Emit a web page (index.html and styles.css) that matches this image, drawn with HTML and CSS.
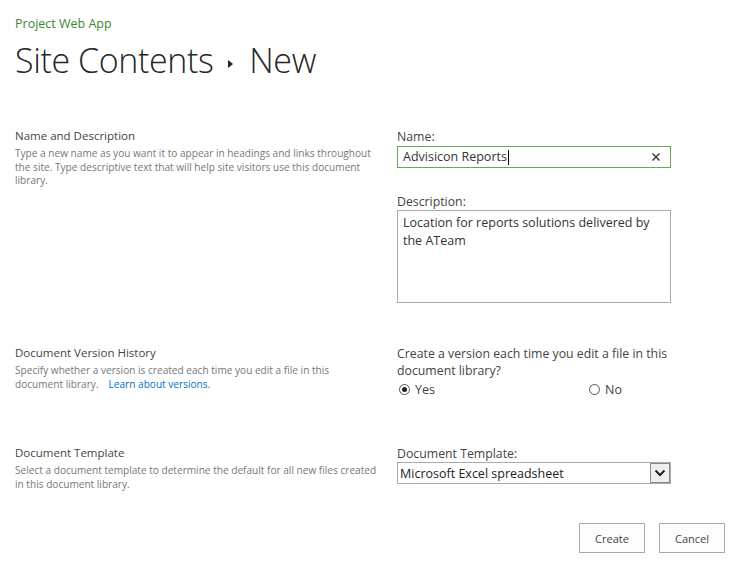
FILE: index.html
```html
<!DOCTYPE html>
<html>
<head>
<meta charset="utf-8">
<link rel="stylesheet" href="styles.css">
</head>
<body>
<div class="page">
  <div class="suite">Project Web App</div>
  <h1 class="title">Site Contents <span class="crumb-arrow"></span> New</h1>

  <div class="form">
    <div class="row row-name">
      <div class="info">
        <div class="info-title">Name and Description</div>
        <div class="info-desc">Type a new name as you want it to appear in headings and links throughout the site. Type descriptive text that will help site visitors use this document library.</div>
      </div>
      <div class="field">
        <div class="label">Name:</div>
        <div class="textbox focused">
          <span class="value">Advisicon Reports</span><span class="caret"></span>
          <svg class="clear" width="10" height="10" viewBox="0 0 10 10"><path d="M1.5 1.5 L8.5 8.5 M8.5 1.5 L1.5 8.5" stroke="#444" stroke-width="1.6"/></svg>
        </div>
        <div class="label label-desc">Description:</div>
        <div class="textarea">Location for reports solutions delivered by the ATeam</div>
      </div>
    </div>

    <div class="row row-version">
      <div class="info">
        <div class="info-title">Document Version History</div>
        <div class="info-desc narrow">Specify whether a version is created each time you edit a file in this document library.<a class="link" href="#">Learn about versions.</a></div>
      </div>
      <div class="field">
        <div class="label question">Create a version each time you edit a file in this document library?</div>
        <div class="radios">
          <label class="radio"><span class="dot checked"></span>Yes</label>
          <label class="radio"><span class="dot"></span>No</label>
        </div>
      </div>
    </div>

    <div class="row row-template">
      <div class="info">
        <div class="info-title">Document Template</div>
        <div class="info-desc">Select a document template to determine the default for all new files created in this document library.</div>
      </div>
      <div class="field">
        <div class="label">Document Template:</div>
        <div class="select">
          <span class="value">Microsoft Excel spreadsheet</span>
          <span class="select-btn"><svg width="12" height="8" viewBox="0 0 12 8"><path d="M1.5 1.5 L6 6 L10.5 1.5" fill="none" stroke="#222" stroke-width="2"/></svg></span>
        </div>
      </div>
    </div>

    <div class="buttons">
      <button class="btn">Create</button>
      <button class="btn">Cancel</button>
    </div>
  </div>
</div>
</body>
</html>
```

FILE: styles.css
```css
html, body {
  margin: 0;
  padding: 0;
  background: #fff;
}
body {
  font-family: "Open Sans", "Noto Sans", "Liberation Sans", sans-serif;
  color: #444;
}
.page {
  padding: 15px 0 0 15px;
}
.suite {
  font-size: 12.5px;
  color: #3a8a32;
  line-height: 17px;
}
.title {
  margin: 0;
  font-weight: 300;
  font-size: 34px;
  color: #262626;
  line-height: 44px;
  margin-top: 6px;
  letter-spacing: -0.4px;
}
.crumb-arrow {
  display: inline-block;
  width: 0;
  height: 0;
  border-top: 4px solid transparent;
  border-bottom: 4px solid transparent;
  border-left: 5px solid #222;
  vertical-align: middle;
  margin: 0 8px 0 6px;
}
.form {
  width: 710px;
}
.row {
  display: grid;
  grid-template-columns: 382px 274px;
}
.row-name { margin-top: 46px; }
.row-version { margin-top: 42px; }
.row-template { margin-top: 47px; }
.info-title {
  font-size: 11.5px;
  color: #444;
  line-height: 16px;
}
.info-desc {
  font-size: 10.1px;
  color: #777;
  line-height: 13.5px;
  margin-top: 3px;
  width: 365px;
}
.info-desc.narrow { width: 345px; }
.link {
  color: #0072c6;
  text-decoration: none;
  margin-left: 10px;
}
.label {
  font-size: 12.3px;
  color: #444;
  line-height: 17px;
}
.textbox {
  margin-top: 1px;
  height: 20px;
  border: 1px solid #6aa84f;
  display: flex;
  align-items: center;
  padding: 0 9px 0 5px;
  font-size: 12.5px;
  color: #333;
}
.textbox .value { line-height: 20px; }
.caret {
  display: inline-block;
  width: 1px;
  height: 15px;
  background: #000;
  margin-left: 1px;
}
.clear { margin-left: auto; }
.label-desc { margin-top: 25px; }
.textarea {
  margin-top: 0;
  height: 85px;
  border: 1px solid #ababab;
  padding: 3px 5px;
  font-size: 12.5px;
  line-height: 18px;
  color: #333;
}
.question { width: 280px; }
.radios {
  display: grid;
  grid-template-columns: 190px auto;
  margin-top: 2px;
}
.radio {
  display: flex;
  align-items: center;
  font-size: 12.5px;
  color: #444;
  line-height: 17px;
  padding-left: 2px;
}
.dot {
  width: 11px;
  height: 11px;
  border: 1px solid #555;
  border-radius: 50%;
  box-sizing: border-box;
  margin-right: 5px;
  position: relative;
}
.dot.checked::after {
  content: "";
  position: absolute;
  left: 2px;
  top: 2px;
  width: 5px;
  height: 5px;
  border-radius: 50%;
  background: #222;
}
.select {
  margin-top: 0;
  height: 20px;
  border: 1px solid #ababab;
  display: flex;
  align-items: center;
  font-size: 12.5px;
  color: #222;
}
.select .value { padding-left: 2px; flex: 1; }
.select-btn {
  width: 18px;
  height: 18px;
  border: 1px solid #888;
  background: #efefef;
  display: flex;
  align-items: center;
  justify-content: center;
  margin-right: 0;
}
.buttons {
  display: flex;
  justify-content: flex-end;
  gap: 14px;
  margin-top: 32px;
}
.btn {
  width: 66px;
  height: 30px;
  border: 1px solid #ababab;
  background: #fdfdfd;
  font-family: inherit;
  font-size: 11px;
  color: #444;
  padding: 0;
}
```
